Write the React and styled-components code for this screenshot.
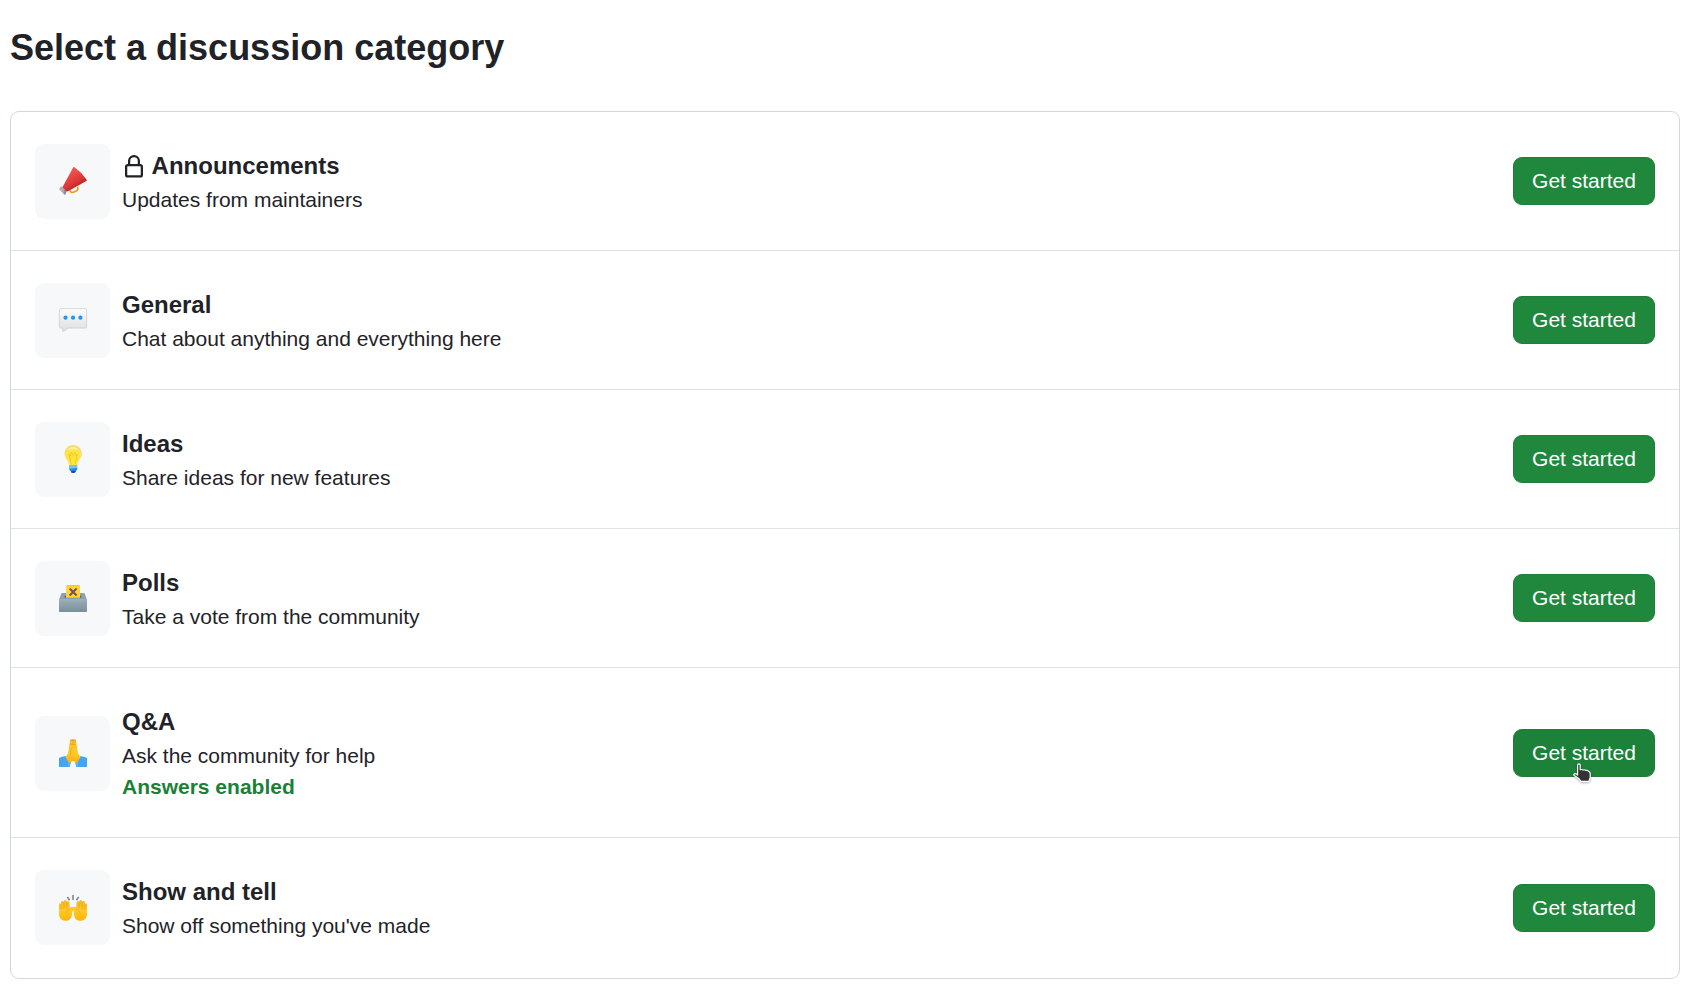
import React from "react";
import styled, { createGlobalStyle } from "styled-components";

const GlobalStyle = createGlobalStyle`
  * { box-sizing: border-box; }
  body {
    margin: 0;
    background: #fff;
    color: #1f2328;
    font: 21px/31px "Liberation Sans", Arial, sans-serif;
  }
`;

const Page = styled.main`
  padding: 21px 26px 21px 10px;
`;

const Heading = styled.h1`
  margin: 0 0 36px;
  font-size: 36px;
  line-height: 54px;
  font-weight: 700;
`;

const List = styled.ul`
  margin: 0;
  padding: 0;
  list-style: none;
  border: 1px solid #d1d9e0;
  border-radius: 9px;
`;

const StartButton = styled.button`
  position: relative;
  flex: none;
  width: 142px;
  height: 48px;
  margin-top: 13px;
  padding: 0;
  border: 1px solid #1f7d38;
  border-radius: 9px;
  background: ${(p) => (p.$hovered ? "#1c8139" : "#1f883d")};
  color: #fff;
  font: inherit;
  line-height: 44px;
`;

const Row = styled.li`
  display: flex;
  align-items: flex-start;
  height: ${(p) => (p.$tall ? 170 : 139)}px;
  padding: ${(p) => (p.$tall ? 48 : 32)}px 24px 0;
  border-bottom: 1px solid #dfe3e8;

  &:last-child {
    height: 140px;
    border-bottom: 0;
  }

  &:last-child ${StartButton} {
    margin-top: 14px;
  }
`;

const Tile = styled.div`
  flex: none;
  width: 75px;
  height: 75px;
  margin-right: 12px;
  padding: 23px 0 0 24px;
  border-radius: 9px;
  background: #f6f8fa;
`;

const Emoji = styled.svg`
  display: block;
  width: 28px;
  height: 28px;
  overflow: visible;
`;

const Details = styled.div`
  flex: 1;
  margin-top: ${(p) => (p.$tall ? -12 : 4)}px;
`;

const Title = styled.h2`
  display: flex;
  align-items: center;
  margin: 0;
  font-size: 24px;
  line-height: 36px;
  font-weight: 700;
`;

const LockIcon = styled.svg`
  flex: none;
  width: 24px;
  height: 24px;
  margin: 2px 5.6px 0 0;
  fill: currentColor;
`;

const Description = styled.p`
  margin: 0;
`;

const AnswersLabel = styled.p`
  margin: 0;
  color: #1a7f37;
  font-weight: 700;
`;

const Pointer = styled.svg`
  position: absolute;
  left: 59px;
  top: 33px;
  width: 21px;
  height: 21px;
  filter: drop-shadow(0 1px 1px rgba(0, 0, 0, 0.3));
`;

function Megaphone() {
  return (
    <Emoji viewBox="0 0 28 28" aria-hidden="true">
      <defs>
        <linearGradient id="cone" x1="0.3" y1="0.2" x2="0.7" y2="0.85">
          <stop offset="0" stopColor="#ef5350" />
          <stop offset="0.6" stopColor="#dc3838" />
          <stop offset="1" stopColor="#b71c1c" />
        </linearGradient>
      </defs>
      <path d="M10.8 23.3 Q11.8 26.2 14.5 25.2 L17.6 23.8 Q19.6 22.6 18.6 19.8" fill="none" stroke="#f09a17" strokeWidth="1.7" />
      <path d="M1.5 20 L4 19.3 L8 24 L6.2 27.8 Q4.8 27.8 4.2 26.6 L0.3 22.6 Q0 21 1.5 20Z" fill="#b0b0b0" />
      <path d="M4.8 23.2 L7.6 23.8 L6.2 27.8 L4.8 26.8Z" fill="#8c8c8c" />
      <path d="M14.1 0.4 Q14.9 -0.3 15.8 0.4 Q23 5.5 27.7 12.7 Q28.2 13.6 27.3 14.1 L9 24.2 Q7.8 24.6 6.5 23.4 L4.2 21 Q3.6 20 4.1 19.1Z" fill="url(#cone)" />
    </Emoji>
  );
}

function SpeechBubble() {
  return (
    <Emoji viewBox="0 0 28 28" aria-hidden="true">
      <defs>
        <linearGradient id="bubble" x1="0" y1="0" x2="0" y2="1">
          <stop offset="0" stopColor="#fcfcfc" />
          <stop offset="1" stopColor="#dedede" />
        </linearGradient>
      </defs>
      <path d="M2 2.7 H26 Q27.6 2.7 27.6 4.3 V20.5 Q27.6 22.1 26 22.1 H9 Q7 24.8 3.7 25.3 Q2.8 25.2 3.5 24.2 Q4.2 23 3.8 22.1 H2 Q0.4 22.1 0.4 20.5 V4.3 Q0.4 2.7 2 2.7Z" fill="url(#bubble)" stroke="#cecece" strokeWidth="0.8" />
      <g fill="#2196f3">
        <circle cx="6.5" cy="11.7" r="2.1" />
        <circle cx="14" cy="11.7" r="2.1" />
        <circle cx="21.4" cy="11.7" r="2.1" />
      </g>
    </Emoji>
  );
}

function Bulb() {
  return (
    <Emoji viewBox="0 0 28 28" aria-hidden="true">
      <defs>
        <radialGradient id="glass" cx="0.5" cy="0.65" r="0.6">
          <stop offset="0" stopColor="#ffe52e" />
          <stop offset="0.7" stopColor="#ffe44a" />
          <stop offset="1" stopColor="#f0de78" />
        </radialGradient>
      </defs>
      <path d="M14.2 -0.1 C8.8 -0.1 5.5 4 5.5 8.6 C5.5 13.4 9.2 15 9.8 18.8 Q10 20.8 11.5 20.8 H17 Q18.4 20.8 18.6 18.8 C19.2 15 22.9 13.4 22.9 8.6 C22.9 4 19.6 -0.1 14.2 -0.1Z" fill="url(#glass)" />
      <path d="M12.2 19.5 L10.3 10.2 M16.2 19.5 L18.1 10.2 M9.5 8.5 L11.2 11 L12.4 7.5 L14.2 10.5 L16 7.5 L17.2 11 L19 8.5" fill="none" stroke="#f0c224" strokeWidth="0.8" />
      <path d="M8.5 4.8 Q14.2 -0.6 20 4.8 Q14 3 8.5 4.8Z" fill="#fff7a8" opacity="0.8" />
      <path d="M10.2 20.5 H18.2 V24 Q18 25.5 16.8 26 L16 27.5 Q14.2 28.3 12.4 27.5 L11.6 26 Q10.3 25.5 10.2 24Z" fill="#2588e5" />
      <path d="M10.2 20.5 H18.2 V23 L10.2 23.8Z" fill="#82bff4" />
      <path d="M12 26.2 L17 25.8 L16 27.5 Q14.2 28.3 12.4 27.5Z" fill="#0d47a1" />
    </Emoji>
  );
}

function BallotBox() {
  return (
    <Emoji viewBox="0 0 28 28" aria-hidden="true">
      <defs>
        <linearGradient id="boxFront" x1="0" y1="0" x2="0" y2="1">
          <stop offset="0" stopColor="#9eafb8" />
          <stop offset="1" stopColor="#78909c" />
        </linearGradient>
      </defs>
      <path d="M2.6 9 H25.4 L28 15.8 H0Z" fill="#8fa2ac" />
      <path d="M0 15 H28 V26.9 Q28 27.9 27 27.9 H1 Q0 27.9 0 26.9Z" fill="url(#boxFront)" />
      <path d="M5.7 11.7 H22.3 Q23.2 13.8 21.8 13.8 H6.2 Q4.8 13.8 5.7 11.7Z" fill="#5b6f79" />
      <path d="M8.6 0.9 H19.7 Q21 0.9 21 2.2 V13.7 H7.1 V2.2 Q7.1 0.9 8.6 0.9Z" fill="#fdd835" />
      <path d="M8 1.7 H20.2" stroke="#e4bd27" strokeWidth="0.7" />
      <path d="M10.6 4.5 L17.6 11.5 M17.6 4.5 L10.6 11.5" stroke="#795548" strokeWidth="2.1" />
    </Emoji>
  );
}

function FoldedHands() {
  return (
    <Emoji viewBox="0 0 28 28" aria-hidden="true">
      <defs>
        <linearGradient id="palms" x1="0" y1="0" x2="0" y2="1">
          <stop offset="0" stopColor="#f9bd25" />
          <stop offset="0.6" stopColor="#ffca28" />
          <stop offset="1" stopColor="#fbad09" />
        </linearGradient>
      </defs>
      <path d="M0 19 Q3.5 16.8 7.2 17.2 L11.8 24.2 Q10.7 25.5 11 28 H0Z" fill="#42a5f5" />
      <path d="M28 19 Q24.5 16.8 20.8 17.2 L16.2 24.2 Q17.3 25.5 17 28 H28Z" fill="#42a5f5" />
      <path d="M8.5 20.5 L11.8 24.5 Q10.7 25.5 11 28 H9.5 Q9.2 24 8.5 20.5Z" fill="#64b5f6" />
      <path d="M19.5 20.5 L16.2 24.5 Q17.3 25.5 17 28 H18.5 Q18.8 24 19.5 20.5Z" fill="#64b5f6" />
      <path d="M11.2 0.4 Q12.5 -0.2 14 0.1 Q15.5 -0.2 16.8 0.4 Q17.8 6 18.5 12 Q19.2 15.8 21.4 18.2 Q19.8 21.8 16.8 24.3 Q15.5 22 14 22 Q12.5 22 11.2 24.3 Q8.2 21.8 6.6 18.2 Q8.8 15.8 9.5 12 Q10.2 6 11.2 0.4Z" fill="url(#palms)" />
      <path d="M14 0.7 V5.5 M11 5.4 H17 M11.3 1.6 H16.7 M12 9 Q11.6 15 10.6 18.5" fill="none" stroke="#e49b16" strokeWidth="0.6" />
    </Emoji>
  );
}

function RaisedHands() {
  return (
    <Emoji viewBox="0 0 28 28" aria-hidden="true">
      <defs>
        <linearGradient id="hand" x1="0" y1="0" x2="0" y2="1">
          <stop offset="0" stopColor="#f3b72b" />
          <stop offset="0.5" stopColor="#ffca28" />
          <stop offset="1" stopColor="#ffb300" />
        </linearGradient>
        <g id="raised">
          <path d="M0 12 Q0 10.3 1.1 10.3 L1.9 11.5 V9.6 Q2 8 3.3 8 Q4.5 8 4.8 8.8 Q5.1 6.9 6.4 6.9 Q7.7 6.9 7.9 8.5 Q9.8 7.5 10.5 9.5 L10.9 14.6 L12 13.9 Q13.6 13.2 14.1 14.6 L14 17.2 Q12.9 18.8 13 21.4 Q12.4 27.8 6.4 27.8 Q0.6 27.6 0 21.3Z" fill="url(#hand)" />
          <path d="M2.1 11.2 V16.5 M4.9 9.5 V16 M7.9 9.5 L8.1 16 M6.5 20.5 Q8 17.8 11 16" fill="none" stroke="#e59600" strokeWidth="0.5" />
        </g>
      </defs>
      <use href="#raised" />
      <use href="#raised" transform="translate(28 0) scale(-1 1)" />
      <path d="M14 2 V7 M8.3 4 L10.6 7.3 M19.7 4 L17.4 7.3" stroke="#858889" strokeWidth="1.6" />
    </Emoji>
  );
}

function Lock() {
  return (
    <LockIcon viewBox="0 0 16 16" aria-hidden="true">
      <path d="M4 4a4 4 0 0 1 8 0v2h.25c.966 0 1.75.784 1.75 1.75v5.5A1.75 1.75 0 0 1 12.25 15h-8.5A1.75 1.75 0 0 1 2 13.25v-5.5C2 6.784 2.784 6 3.75 6H4Zm8.25 3.5h-8.5a.25.25 0 0 0-.25.25v5.5c0 .138.112.25.25.25h8.5a.25.25 0 0 0 .25-.25v-5.5a.25.25 0 0 0-.25-.25ZM10.5 6V4a2.5 2.5 0 1 0-5 0v2Z" />
    </LockIcon>
  );
}

function HandPointer() {
  return (
    <Pointer viewBox="0 0 21 21" aria-hidden="true">
      <path d="M4.6 2.3Q4.6 0.9 5.9 0.9T7.2 2.3V6.8Q8.8 6.1 10 7Q11.8 6.3 13 7.5Q14.6 7 15.6 8.4Q17.4 8.8 17.2 11V14.6L15.8 18.4H8L5.8 15.6L1.2 12.6Q0.3 11.2 1.4 10.8Q2.8 10.4 4.6 12Z" fill="#333" stroke="#fff" strokeWidth="1.2" strokeLinejoin="round" />
    </Pointer>
  );
}

const categories = [
  { icon: Megaphone, title: "Announcements", text: "Updates from maintainers", locked: true },
  { icon: SpeechBubble, title: "General", text: "Chat about anything and everything here" },
  { icon: Bulb, title: "Ideas", text: "Share ideas for new features" },
  { icon: BallotBox, title: "Polls", text: "Take a vote from the community" },
  { icon: FoldedHands, title: "Q&A", text: "Ask the community for help", answers: true },
  { icon: RaisedHands, title: "Show and tell", text: "Show off something you've made" },
];

export default function App() {
  return (
    <>
      <GlobalStyle />
      <Page>
        <Heading>Select a discussion category</Heading>
        <List>
          {categories.map(({ icon: Icon, ...c }) => (
            <Row key={c.title} $tall={c.answers}>
              <Tile>
                <Icon />
              </Tile>
              <Details $tall={c.answers}>
                <Title>
                  {c.locked && <Lock />}
                  {c.title}
                </Title>
                <Description>{c.text}</Description>
                {c.answers && <AnswersLabel>Answers enabled</AnswersLabel>}
              </Details>
              <StartButton type="button" $hovered={c.answers}>
                Get started
                {c.answers && <HandPointer />}
              </StartButton>
            </Row>
          ))}
        </List>
      </Page>
    </>
  );
}
